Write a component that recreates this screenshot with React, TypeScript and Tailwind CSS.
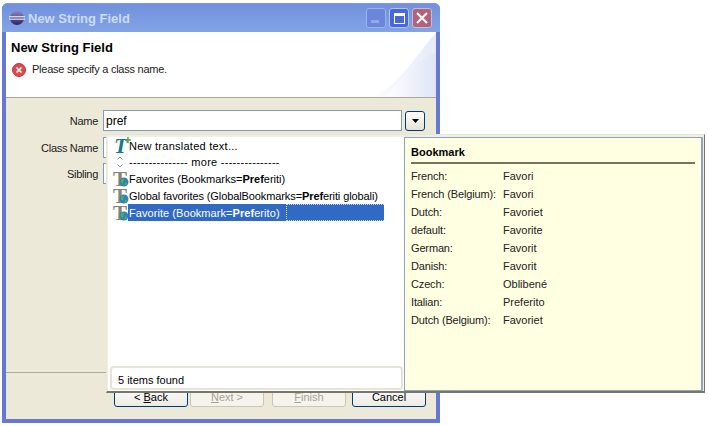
import type { ReactNode } from "react";

const translations = [
  ["French:", "Favori"],
  ["French (Belgium):", "Favori"],
  ["Dutch:", "Favoriet"],
  ["default:", "Favorite"],
  ["German:", "Favorit"],
  ["Danish:", "Favorit"],
  ["Czech:", "Oblibené"],
  ["Italian:", "Preferito"],
  ["Dutch (Belgium):", "Favoriet"],
];

function EclipseIcon() {
  return (
    <svg width="16" height="16" viewBox="0 0 16 16" className="shrink-0">
      <defs>
        <linearGradient id="ecl" x1="0" y1="0" x2="0" y2="1">
          <stop offset="0" stopColor="#8d86b8" />
          <stop offset="1" stopColor="#2c2268" />
        </linearGradient>
      </defs>
      <circle cx="8" cy="8" r="7" fill="url(#ecl)" />
      <rect x="0" y="6.2" width="16" height="1.1" fill="#eef0fb" />
      <rect x="0" y="8.6" width="16" height="1.1" fill="#eef0fb" />
    </svg>
  );
}

function ErrorIcon() {
  return (
    <svg width="14" height="14" viewBox="0 0 14 14" className="shrink-0">
      <circle cx="7" cy="7" r="6.5" fill="#e2484c" stroke="#b23a40" />
      <path d="M4.5 4.5l5 5M9.500 4.500l-5 5" stroke="#fff" strokeWidth="1.6" />
    </svg>
  );
}

function GrayT() {
  return (
    <span className="relative block w-[15px] h-[17px] shrink-0 ml-[3px]">
      <span className="block text-[21px] leading-[18px] font-bold text-[#85837a] [font-family:'Liberation_Serif',serif]">
        T
      </span>
      <svg width="10" height="10" viewBox="0 0 10 10" className="absolute left-[6px] top-[7px]">
        <circle cx="5" cy="5" r="4.500" fill="#2a86b8" />
        <path d="M2 3.500c1-1.500 3-2 3-.5s-2 1-1 2.500-1.500 1-2-.5zM6 6c1.500-.5 2.500 0 1.500 1.500S5 8 6 6z" fill="#5fb04c" />
      </svg>
    </span>
  );
}

function ProposalRow({ icon, selected, children }: { icon: ReactNode; selected?: boolean; children: ReactNode }) {
  return (
    <div className="flex h-[17px] items-center">
      <div className="w-[18px] shrink-0">{icon}</div>
      {selected ? (
        <div className="flex w-[256px] h-[17px] items-center bg-[#316ac5] text-white pl-[1px]">
          <span className="tracking-[0.06px]">{children}</span>
          <span className="ml-[6px] flex-1 h-full border border-dotted border-[#c8d4ea] border-r-0" />
        </div>
      ) : (
        <div className="whitespace-nowrap pl-[1px]">{children}</div>
      )}
    </div>
  );
}

function WizardButton({ children, disabled }: { children: ReactNode; disabled?: boolean }) {
  return (
    <div
      className={
        disabled
          ? "w-[74px] h-[23px] pt-[2px] rounded-[3px] border border-[#c9c7ba] bg-[#f4f3ec] text-[#a5a496] flex items-center justify-center"
          : "w-[74px] h-[23px] pt-[2px] rounded-[3px] border border-[#003c74] bg-gradient-to-b from-white to-[#ecebe4] text-black flex items-center justify-center"
      }
    >
      {children}
    </div>
  );
}

function FormLabel({ children }: { children: ReactNode }) {
  return <div className="w-[97px] text-right pr-[5px] pt-[1px] shrink-0 text-[#222] tracking-[-0.3px]">{children}</div>;
}

export default function App() {
  return (
    <div className="relative w-[708px] h-[426px] bg-white overflow-hidden pl-[2px] pt-[3px] text-[11px] leading-[14px] text-black [font-family:'Liberation_Sans',Arial,sans-serif]">
      <div className="w-[438px] h-[420px] rounded-t-[6px] bg-[#6877d4] flex flex-col px-[4px] pb-[4px]">
        <div className="h-[29px] -mx-[4px] px-[7px] rounded-t-[6px] bg-gradient-to-b from-[#7290dd] to-[#82a4e6] flex items-center gap-[3px] border-t border-[#8098e4]">
          <EclipseIcon />
          <div className="text-[13px] font-bold flex-1 pt-[2px] text-[#cddcf6]">New String Field</div>
          <div className="flex gap-[3px] pr-[1px]">
            <div className="w-[20px] h-[20px] rounded-[3px] border border-[#9cb2ea] bg-[#6a87dc] flex items-end pl-[4px] pb-[4px]">
              <div className="w-[8px] h-[3px] bg-[#93a9e6]" />
            </div>
            <div className="w-[20px] h-[20px] rounded-[3px] border border-[#b4c6f0] bg-[#4668dc] flex items-center justify-center">
              <div className="w-[11px] h-[11px] border border-white border-t-[3px]" />
            </div>
            <div className="w-[20px] h-[20px] rounded-[3px] border border-[#c8bcd0] bg-[#b0647c] flex items-center justify-center">
              <svg width="12" height="12" viewBox="0 0 12 12">
                <path d="M1 1l10 10M11 1L1 11" stroke="#fff" strokeWidth="2" />
              </svg>
            </div>
          </div>
        </div>

        <div className="relative h-[66px] bg-white pl-[5px] pt-[8px] border-b border-[#aca899]">
          <svg width="68" height="65" viewBox="0 0 68 65" className="absolute right-0 top-0">
            <defs>
              <linearGradient id="ban" x1="0" y1="0" x2="1" y2="0">
                <stop offset="0" stopColor="#ffffff" />
                <stop offset="1" stopColor="#e6ebf8" />
              </linearGradient>
              <linearGradient id="ban2" x1="0" y1="0" x2="1" y2="0">
                <stop offset="0" stopColor="#ffffff" />
                <stop offset="1" stopColor="#dfe5f6" />
              </linearGradient>
            </defs>
            <path d="M0 65C28 60 48 22 68 1V65z" fill="url(#ban)" />
            <path d="M18 65C32 50 44 28 68 21V65z" fill="url(#ban2)" />
          </svg>
          <div className="relative text-[13px] leading-[16px] font-bold">New String Field</div>
          <div className="relative flex items-center gap-[6px] mt-[7px] pl-[1px]">
            <ErrorIcon />
            <span className="text-[#222] tracking-[-0.25px] -translate-y-[1px]">Please specify a class name.</span>
          </div>
        </div>

        <div className="flex-1 bg-[#ece9d8] flex flex-col">
          <div className="flex-1 pt-[12px]">
            <div className="flex items-center h-[21px]">
              <FormLabel>Name</FormLabel>
              <div className="w-[299px] h-[21px] bg-white border border-[#7f9db9] pl-[2px] flex items-center text-[12px]">pref</div>
              <div className="ml-[3px] w-[20px] h-[20px] rounded-[3px] border border-[#003c74] bg-gradient-to-b from-white to-[#e4e2d8] flex items-center justify-center">
                <svg width="7" height="4" viewBox="0 0 7 4">
                  <path d="M0 0h7L3.500 4z" fill="#000" />
                </svg>
              </div>
            </div>
            <div className="flex items-center h-[21px] mt-[6px]">
              <FormLabel>Class Name</FormLabel>
              <div className="w-[299px] h-[21px] bg-white border border-[#7f9db9]" />
            </div>
            <div className="flex items-center h-[21px] mt-[5px]">
              <FormLabel>Sibling</FormLabel>
              <div className="w-[299px] h-[21px] bg-white border border-[#7f9db9]" />
            </div>
          </div>
          <div className="h-[47px] border-t border-[#aca899] flex pt-[11px] pl-[108px]">
            <WizardButton>
              <span>
                &lt; <span className="underline">B</span>ack
              </span>
            </WizardButton>
            <div className="ml-[2px]">
              <WizardButton disabled>
                <span>
                  <span className="underline">N</span>ext &gt;
                </span>
              </WizardButton>
            </div>
            <div className="ml-[8px]">
              <WizardButton disabled>
                <span>
                  <span className="underline">F</span>inish
                </span>
              </WizardButton>
            </div>
            <div className="ml-[6px]">
              <WizardButton>Cancel</WizardButton>
            </div>
          </div>
        </div>
      </div>

      {/* content assist popup, sits over the wizard */}
      <div className="absolute left-[106px] top-[134px] w-[599px] h-[259px] bg-[#f1efe2] border border-[#e8e6da] border-r-[#77756c] border-b-[#77756c] border-b-2 flex pl-[1px] pt-[2px] pr-[1px]">
        <div className="w-[296px] bg-white flex flex-col pl-[2px] pb-[1px]">
          <div className="flex-1">
            <ProposalRow
              icon={
                <span className="relative block w-[18px] h-[17px] pl-[4px] text-[22px] leading-[18px] font-bold italic text-[#117a8b] [font-family:'Liberation_Serif',serif]">
                  T
                  <svg width="6" height="6" viewBox="0 0 6 6" className="absolute left-[15px] top-0">
                    <path d="M3 0v6M0 3h6" stroke="#4fa84a" strokeWidth="1.500" />
                  </svg>
                </span>
              }
            >
              <span className="tracking-[0.25px]">New translated text...</span>
            </ProposalRow>
            <div className="flex h-[16px] items-center">
              <div className="w-[18px] shrink-0 flex flex-col items-center pl-[1px] gap-[4px]">
                <svg width="6" height="4" viewBox="0 0 6 4">
                  <path d="M0.500 3.500L3 1l2.500 2.500" fill="none" stroke="#a0a0a0" />
                </svg>
                <svg width="6" height="4" viewBox="0 0 6 4">
                  <path d="M0.500 0.500L3 3l2.500-2.500" fill="none" stroke="#8090b0" />
                </svg>
              </div>
              <div className="pl-[1px] tracking-[0.27px]">--------------- more ---------------</div>
            </div>
            <ProposalRow icon={<GrayT />}>
              Favorites (Bookmarks=<b>Pref</b>eriti)
            </ProposalRow>
            <ProposalRow icon={<GrayT />}>
              <span className="tracking-[-0.1px]">
                Global favorites (GlobalBookmarks=<b>Pref</b>eriti globali)
              </span>
            </ProposalRow>
            <ProposalRow icon={<GrayT />} selected>
              Favorite (Bookmark=<b>Pref</b>erito)
            </ProposalRow>
          </div>
          <div className="h-[24px] mr-[1px] rounded-[4px] border-2 border-[#e6e4d8] pl-[6px] pt-[3px] flex items-center">5 items found</div>
        </div>
        <div className="flex-1 bg-[#ffffe1] border border-[#8ea2c2] border-r-2 pl-[6px] pr-[6px] pt-[7px] text-[#222]">
          <div className="font-bold text-black h-[17px] leading-[15px]">Bookmark</div>
          <div className="h-[2px] bg-[#77735c] mb-[3px]" />
          {translations.map(([language, value]) => (
            <div key={language} className="flex h-[18px] items-center">
              <div className="w-[92px] shrink-0 tracking-[-0.15px]">{language}</div>
              <div>{value}</div>
            </div>
          ))}
        </div>
      </div>
    </div>
  );
}
